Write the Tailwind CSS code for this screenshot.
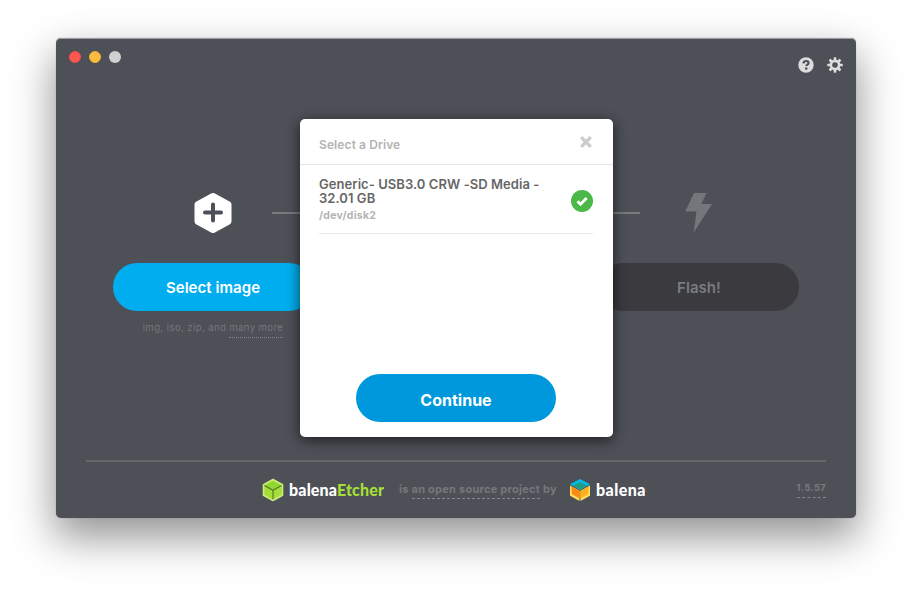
<!DOCTYPE html>
<html lang="en">
<head>
<meta charset="utf-8">
<title>balenaEtcher</title>
<script src="https://cdn.jsdelivr.net/npm/@tailwindcss/browser@4"></script>
</head>
<body class="w-[912px] h-[592px] overflow-hidden bg-white px-14 pt-[38px] font-[Inter,sans-serif]">
<div class="relative flex flex-col w-[800px] h-[480px] rounded-[5px] bg-[#4d5057] shadow-[0_0_1px_0_rgba(0,0,0,0.35),0_18px_42px_2px_rgba(0,0,0,0.42)]">
  <header class="flex justify-between h-[155px] pl-[13px] pr-[13.5px] border-t border-[#9a9b9e] rounded-t-[5px]">
    <div class="flex gap-2 pt-3">
      <span class="size-3 rounded-full bg-[#fc5753] border border-[#f04f4b]"></span>
      <span class="size-3 rounded-full bg-[#fdbc40] border border-[#f0ae3a]"></span>
      <span class="size-3 rounded-full bg-[#d0d0d0]"></span>
    </div>
    <div class="flex gap-[13px] pt-[18px]">
      <svg class="size-4" viewBox="0 0 16 16"><circle cx="8" cy="8" r="7.7" fill="#ddd"/><path d="M5.500 6.300C5.700 4.700 6.700 4 8.100 4c1.500 0 2.500.8 2.500 2 0 1.600-2.300 1.500-2.300 3.100" fill="none" stroke="#4d5057" stroke-width="2.200"/><rect x="7.100" y="10.400" width="2.300" height="2.200" fill="#4d5057"/></svg>
      <svg class="size-4" viewBox="0 0 16 16"><g fill="#ddd"><rect x="6.700" y=".3" width="2.600" height="15.400" rx=".6"/><rect x="6.700" y=".3" width="2.600" height="15.400" rx=".6" transform="rotate(45 8 8)"/><rect x="6.700" y=".3" width="2.600" height="15.400" rx=".6" transform="rotate(90 8 8)"/><rect x="6.700" y=".3" width="2.600" height="15.400" rx=".6" transform="rotate(135 8 8)"/><circle cx="8" cy="8" r="5.400"/></g><circle cx="8" cy="8" r="2.800" fill="#4d5057"/></svg>
    </div>
  </header>

  <main class="flex justify-between px-[57px] h-[267px]">
    <section class="flex flex-col items-center w-[200px]">
      <svg class="w-[38px] h-10" viewBox="0 0 38 40"><path d="M19 3 34.500 11.500V28.500L19 37 3.500 28.500V11.500Z" fill="#fff" stroke="#fff" stroke-width="6" stroke-linejoin="round"/><path d="M19 11.500v16M11 19.500h16" stroke="#4d5057" stroke-width="4" stroke-linecap="round"/></svg>
      <button class="mt-[30px] w-[200px] h-12 rounded-full bg-[#00aeef] text-white text-[15px] font-semibold tracking-[0.050px] pt-[3px]">Select image</button>
      <p class="mt-[10px] text-[9.5px] leading-[14px] tracking-[0.42px] text-[#75777b] whitespace-nowrap">img, iso, zip, and <span class="inline-block h-[17px] border-b border-dotted border-[#85878b]">many more</span></p>
    </section>
    <div class="flex justify-between w-[368px] -mx-[41px] pt-[19px]">
      <span class="h-0.5 w-[60px] bg-[#797c7f]"></span>
      <span class="h-0.5 w-[60px] bg-[#797c7f]"></span>
    </div>
    <section class="flex flex-col items-center w-[200px]">
      <svg class="w-7 h-10" viewBox="0 0 28 40"><path d="M9 0H21.500L16.300 11H27L8.700 39.500 11.500 18.500H.3Z" fill="#75767b"/></svg>
      <button class="mt-[30px] w-[200px] h-12 rounded-full bg-[#3a3a3f] text-[#797c80] text-[15px] font-semibold tracking-[0.050px] pt-[3px]">Flash!</button>
    </section>
  </main>

  <footer class="grid grid-cols-[176px_1fr_61px] mx-[30px] h-14 border-t-2 border-[#66696b] text-[11px] font-bold text-[#75777b]">
    <span></span>
    <div class="flex h-14 items-center">
      <svg class="w-[22px] h-6" viewBox="0 0 22 24"><path d="M11 1.500 20.500 6.700V17.300L11 22.500 1.500 17.300V6.700Z" fill="#a5de37" stroke="#c8ed7c" stroke-width="1.600" stroke-linejoin="round"/><path d="M3 7.300 11 3 19 7.300 11 11.800Z" fill="#91d631"/><path d="M2.500 7.500 11 12.300 19.500 7.500M11 12.300V21.500" fill="none" stroke="#55702f" stroke-width="1.100"/></svg>
      <span class="ml-[5px] w-[110px] text-[16px] leading-6 font-[Lato,sans-serif] font-black text-white whitespace-nowrap tracking-[0.15px]">balena<span class="text-[#a5de37]">Etcher</span></span>
      <span class="w-[170px] -mt-px whitespace-nowrap tracking-[0.25px]">is <span class="inline-block h-[18px] border-b border-dashed border-[#85878b]">an open source project</span> by</span>
      <svg class="w-[22px] h-6" viewBox="0 0 22 24"><path d="M11 1 21 6.300 11 12 1 6.300Z" fill="#00bcec"/><path d="M11 4 18 7.500 11 11.600 4 7.500Z" fill="#239b83"/><path d="M1 7.500 10.500 12.800V23L1 17.700Z" fill="#ffdb60"/><path d="M2.200 8.200 10.700 12.900V20.500L3 16.300Z" fill="#fc8b16"/><path d="M21 7.500 11.500 12.800V23L21 17.700Z" fill="#ffdb60"/><path d="M19.800 8.200 11.300 12.900V20.500L19 16.300Z" fill="#fdb21d"/></svg>
      <span class="ml-[5px] text-[16px] leading-6 font-[Lato,sans-serif] font-black text-white tracking-[0.45px]">balena</span>
    </div>
    <div class="pt-[19px] text-right text-[9px] leading-[14px]"><span class="inline-block h-[17px] border-b border-dashed border-[#85878b] tracking-[0.4px] font-extrabold">1.5.57</span></div>
  </footer>

  <div class="absolute left-[244px] top-[81px] flex flex-col w-[313px] h-[318px] rounded-[5px] bg-white shadow-[0_3px_14px_0_rgba(0,0,0,0.65)]">
    <div class="flex items-center justify-between h-[46px] pl-[19px] pr-[21px] border-b border-[#e5e5e5]">
      <h1 class="pt-[6px] text-[12px] font-semibold tracking-[0.1px] text-[#b3b3b3]">Select a Drive</h1>
      <svg class="size-3" viewBox="0 0 12 12"><path d="M1.200 1.200 10.800 10.800M10.800 1.200 1.200 10.800" stroke="#ccc" stroke-width="3.200"/></svg>
    </div>
    <div class="flex items-center justify-between mx-[19px] mr-5 h-[69px] border-b border-[#eaeaea]">
      <div class="pt-px">
        <h2 class="w-[235px] text-[13px] leading-[14px] font-semibold tracking-[0.060px] text-[#666]">Generic- USB3.0 CRW -SD Media -<br>32.01 GB</h2>
        <p class="mt-[4px] text-[10.5px] leading-[14px] font-bold tracking-[0.25px] text-[#b3b3b3]">/dev/disk2</p>
      </div>
      <svg class="mt-[3px] size-[22px] shrink-0" viewBox="0 0 22 22"><circle cx="11" cy="11" r="11" fill="#4ab948"/><path d="m6.500 11.300 3 3L15.700 8" fill="none" stroke="#fff" stroke-width="2.800"/></svg>
    </div>
    <button class="mt-auto mb-[15px] ml-14 w-[200px] h-12 rounded-full bg-[#0098dd] text-white text-[16px] font-bold pt-[3px]">Continue</button>
  </div>
</div>
</body>
</html>
